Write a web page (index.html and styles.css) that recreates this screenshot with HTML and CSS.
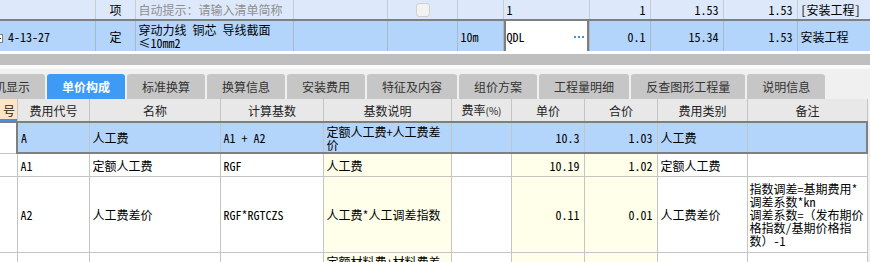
FILE: index.html
```html
<!DOCTYPE html>
<html lang="zh-CN">

<head>
  <meta charset="UTF-8">
  <meta name="viewport" content="width=device-width, initial-scale=1.0">
  <title>单价构成</title>
  <link rel="stylesheet" href="styles.css">
</head>

<body>
  <div class="bill-pane">
    <table class="grid bill">
      <colgroup>
        <col class="b-code">
        <col class="b-type">
        <col class="b-name">
        <col class="b-feature">
        <col class="b-check">
        <col class="b-unit">
        <col class="b-expr">
        <col class="b-qty">
        <col class="b-price">
        <col class="b-total">
        <col class="b-major">
      </colgroup>
      <tr class="item-row">
        <td></td>
        <td class="center">项</td>
        <td class="hint">自动提示：请输入清单简称</td>
        <td></td>
        <td class="center"><span class="check"></span></td>
        <td></td>
        <td>1</td>
        <td class="num">1</td>
        <td class="num">1.53</td>
        <td class="num">1.53</td>
        <td>[安装工程]</td>
      </tr>
      <tr class="quota-row">
        <td class="code"><svg class="tree-box" width="9" height="9" viewBox="0 0 9 9"><rect x="0.5" y="0.5" width="8" height="8" fill="#fff" stroke="#808080"/><line x1="2" y1="4.5" x2="7" y2="4.5" stroke="#333"/></svg>4-13-27</td>
        <td class="center">定</td>
        <td>穿动力线 铜芯 导线截面<br>≤10mm2</td>
        <td></td>
        <td></td>
        <td>10m</td>
        <td class="editing">QDL<svg class="more" width="10" height="2" viewBox="0 0 10 2"><rect x="0" y="0" width="2" height="2" fill="#4a8fd6"/><rect x="4" y="0" width="2" height="2" fill="#4a8fd6"/><rect x="8" y="0" width="2" height="2" fill="#4a8fd6"/></svg></td>
        <td class="num">0.1</td>
        <td class="num">15.34</td>
        <td class="num">1.53</td>
        <td>安装工程</td>
      </tr>
    </table>
  </div>

  <div class="splitter"></div>

  <div class="tab-strip">
    <div class="tab">人材机显示</div>
    <div class="tab active">单价构成</div>
    <div class="tab">标准换算</div>
    <div class="tab">换算信息</div>
    <div class="tab">安装费用</div>
    <div class="tab">特征及内容</div>
    <div class="tab">组价方案</div>
    <div class="tab">工程量明细</div>
    <div class="tab">反查图形工程量</div>
    <div class="tab">说明信息</div>
  </div>

  <table class="grid cost">
    <colgroup>
      <col class="c-no">
      <col class="c-code">
      <col class="c-name">
      <col class="c-base">
      <col class="c-desc">
      <col class="c-rate">
      <col class="c-price">
      <col class="c-total">
      <col class="c-kind">
      <col class="c-note">
    </colgroup>
    <tr class="head">
      <th class="no">号</th>
      <th>费用代号</th>
      <th>名称</th>
      <th>计算基数</th>
      <th>基数说明</th>
      <th>费率<small>(%)</small></th>
      <th>单价</th>
      <th>合价</th>
      <th>费用类别</th>
      <th>备注</th>
    </tr>
    <tr class="selected row-2line">
      <td class="no"></td>
      <td>A</td>
      <td>人工费</td>
      <td>A1 + A2</td>
      <td>定额人工费+人工费差价</td>
      <td></td>
      <td class="num">10.3</td>
      <td class="num">1.03</td>
      <td>人工费</td>
      <td class="last"></td>
    </tr>
    <tr class="row-1line">
      <td class="no"></td>
      <td>A1</td>
      <td>定额人工费</td>
      <td>RGF</td>
      <td class="formula">人工费</td>
      <td></td>
      <td class="num formula">10.19</td>
      <td class="num formula">1.02</td>
      <td>定额人工费</td>
      <td></td>
    </tr>
    <tr class="row-note">
      <td class="no"></td>
      <td>A2</td>
      <td>人工费差价</td>
      <td>RGF*RGTCZS</td>
      <td class="formula">人工费*人工调差指数</td>
      <td></td>
      <td class="num formula">0.11</td>
      <td class="num formula">0.01</td>
      <td>人工费差价</td>
      <td class="note">指数调差=基期费用*调差系数*kn<br>调差系数=（发布期价格指数/基期价格指数）-1</td>
    </tr>
    <tr class="row-next">
      <td class="no"></td>
      <td></td>
      <td></td>
      <td></td>
      <td class="formula top">定额材料费+材料费差价</td>
      <td></td>
      <td class="formula"></td>
      <td class="formula"></td>
      <td></td>
      <td></td>
    </tr>
  </table>
</body>

</html>
```

FILE: styles.css
```css
body {
  margin: 0;
  width: 870px;
  height: 262px;
  overflow: hidden;
  background-color: #f0f0f0;
  font-family: "Noto Sans Mono CJK SC", "Noto Sans CJK SC", monospace;
  font-size: 12px;
  line-height: 13px;
  color: #000;
}

.grid {
  border-collapse: collapse;
  table-layout: fixed;
}

.grid td,
.grid th {
  padding: 0 2px 0 3px;
  border: 1px solid #c4c4c4;
  vertical-align: middle;
  text-align: left;
  overflow: hidden;
}

.num {
  text-align: right !important;
  padding-right: 4px !important;
}

.center {
  text-align: center !important;
}

/* upper grid: bill items */
.bill-pane {
  background-color: #fff;
  padding-bottom: 3px;
}

.bill {
  width: 870px;
}

.b-code { width: 95px; }
.b-type { width: 40px; }
.b-name { width: 158px; }
.b-feature { width: 94px; }
.b-check { width: 70px; }
.b-unit { width: 46px; }
.b-expr { width: 86px; }
.b-qty { width: 61px; }
.b-price { width: 73px; }
.b-total { width: 74px; }
.b-major { width: 73px; }

.bill tr > td:first-child {
  border-left: none;
}

.item-row td {
  height: 19px;
  border-top: none;
  background-color: #dde9fb;
  border-color: #c6ccd4;
}

.hint {
  color: #8f8f8f;
}

.check {
  display: inline-block;
  width: 12px;
  height: 12px;
  border: 1px solid #d0d0d0;
  border-radius: 3px;
  background-color: #f2f2f2;
  vertical-align: middle;
}

.quota-row td {
  height: 30px;
  background-color: #b4d5fb;
  border-color: #a9b9ca;
  border-top: 2px solid #7f7f7f;
  border-bottom: none;
}

.code {
  padding-left: 8px !important;
}

.tree-box {
  margin-left: -14px;
  margin-right: 5px;
  vertical-align: -1px;
}

.quota-row .editing {
  background-color: #fff;
  box-shadow: inset 2px 0 #7f7f7f, inset -2px 0 #7f7f7f;
}

.more {
  float: right;
  margin-top: 6px;
  margin-right: 3px;
}

.splitter {
  height: 11px;
  background-color: #bfbfbf;
  border-bottom: 4px solid #fafafa;
}

/* tabs */
.tab-strip {
  display: flex;
  gap: 2px;
  margin-left: -45px;
  padding-top: 5px;
  background-color: #f0f0f0;
  font-family: "Noto Sans CJK SC", sans-serif;
}

.tab {
  height: 25px;
  line-height: 25px;
  padding: 0 15px;
  background-color: #c6c6c6;
  border-radius: 3px 3px 0 0;
  color: #333;
  white-space: nowrap;
}

.tab.active {
  background-color: #3d9bf5;
  color: #fff;
  font-weight: bold;
}

/* lower grid: cost breakdown */
.cost {
  width: 867px;
  background-color: #fff;
}

.c-no { width: 17px; }
.c-code { width: 72px; }
.c-name { width: 131px; }
.c-base { width: 103px; }
.c-desc { width: 128px; }
.c-rate { width: 60px; }
.c-price { width: 73px; }
.c-total { width: 73px; }
.c-kind { width: 90px; }
.c-note { width: 120px; }

.cost tr > :first-child {
  border-left: none;
}

.head th {
  height: 22px;
  background-color: #e8e8e8;
  font-family: "Noto Sans CJK SC", sans-serif;
  font-weight: normal;
  text-align: center;
  color: #222;
  border-top: none;
  border-bottom: 2px solid #7f7f7f;
}

.head small {
  font-size: 10px;
}

.head .no {
  background-color: #fde6c8;
  text-align: right;
  padding-right: 3px;
  box-shadow: inset 0 -2px #4a90e2;
}

.row-2line td {
  height: 29px;
}

.row-1line td {
  height: 22px;
}

.row-note td {
  height: 75px;
}

.row-next td {
  height: 29px;
}

.top {
  vertical-align: top !important;
  padding-top: 2px !important;
}

.formula {
  background-color: #ffffea;
}

.selected td {
  background-color: #b4d5fb;
  border-bottom: 2px solid #7f7f7f;
}

.selected .no {
  background-color: #fff;
  border-right: 2px solid #7f7f7f;
  border-bottom: 1px solid #c4c4c4;
}

.selected .last {
  border-right: 2px solid #7f7f7f;
}

.note {
  padding: 0 1px 0 2px !important;
}
```
